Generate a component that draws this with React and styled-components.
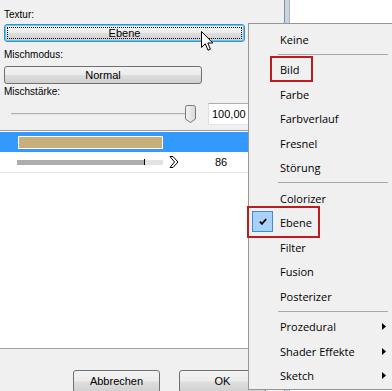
import React from 'react'
import styled, { createGlobalStyle, css } from 'styled-components'

const GlobalStyle = createGlobalStyle`
  html, body {
    margin: 0;
    padding: 0;
    background: #f0f0f0;
  }
  #root {
    width: 392px;
    height: 391px;
  }
`

const Window = styled.div`
  position: relative;
  width: 392px;
  height: 391px;
  overflow: hidden;
  display: flex;
  background: #f0f0f0;
  font-family: "Liberation Sans", Arial, sans-serif;
  color: #000;
`

const LeftPane = styled.div`
  width: 248px;
  height: 391px;
  flex: none;
  display: flex;
  flex-direction: column;
`

const Form = styled.div`
  padding: 9px 0 0 4px;
  display: flex;
  flex-direction: column;
  align-items: flex-start;
`

const Label = styled.div`
  font-size: 10px;
  line-height: 12px;
  margin-top: ${p => p.$gap || 0}px;
`

const buttonFace = css`
  box-sizing: border-box;
  border: 1px solid #707070;
  border-radius: 3px;
  background: linear-gradient(#f3f3f3 0%, #ececec 48%, #dedede 52%, #d0d0d0 100%);
  font-size: 11px;
  text-align: center;
`

const PushButton = styled.div`
  ${buttonFace}
  position: relative;
  width: ${p => p.$w}px;
  height: 18px;
  line-height: 16px;
  margin-top: ${p => p.$gap || 0}px;
  ${p => p.$focused && css`
    border-color: #3c8fcf;
    box-shadow: inset 0 0 0 1px #5ccaf4;
    &::after {
      content: '';
      position: absolute;
      inset: 2px;
      border: 1px dotted #000;
    }
  `}
`

const SliderRow = styled.div`
  display: flex;
  align-items: center;
  height: 22px;
  width: 244px;
  margin-top: 5px;
`

const Slider = styled.div`
  position: relative;
  width: 204px;
  height: 22px;
  flex: none;
  display: flex;
  align-items: center;
`

const Track = styled.div`
  margin: 0 0 1px 7px;
  width: 180px;
  height: 1px;
  background: #b2b2b2;
  border-bottom: 1px solid #e4e4e4;
`

const Thumb = styled.svg`
  position: absolute;
  top: 2px;
`

const NumberBox = styled.div`
  box-sizing: border-box;
  width: 60px;
  height: 22px;
  flex: none;
  border: 1px solid #abadb3;
  border-left-color: #dbdfe6;
  border-bottom-color: #e3e9ef;
  background: #fff;
  font-size: 11px;
  line-height: 20px;
  padding-left: 3px;
`

const List = styled.div`
  flex: 1;
  margin-top: 5px;
  border-top: 1px solid #a0a0a0;
  padding-top: 1px;
  background: #fff;
`

const Row = styled.div`
  display: flex;
  align-items: center;
  height: 20px;
  ${p => p.$selected && css`
    background: #3399ff;
  `}
  ${p => p.$ruled && css`
    border-bottom: 1px solid #e6e6e6;
  `}
`

const Swatch = styled.div`
  box-sizing: border-box;
  margin-left: 18px;
  width: 145px;
  height: 13px;
  border: 1px solid #fff;
  background: #c8ae7b;
`

const Progress = styled.div`
  position: relative;
  margin-left: 17px;
  width: 146px;
  height: 5px;
  background: #e3e3e3;
`

const ProgressFill = styled.div`
  height: 100%;
  background: #adadad;
`

const ProgressTick = styled.div`
  position: absolute;
  top: -1px;
  width: 1px;
  height: 6px;
  background: #000;
`

const Chevron = styled.svg`
  margin-left: 6px;
  flex: none;
`

const Count = styled.span`
  margin-left: 36px;
  font-size: 11px;
`

const Footer = styled.div`
  box-sizing: border-box;
  height: 43px;
  flex: none;
  border-top: 1px solid #a0a0a0;
  padding: 21px 0 0 73px;
  display: flex;
  gap: 19px;
`

const DialogButton = styled.div`
  ${buttonFace}
  flex: none;
  width: 87px;
  height: 23px;
  line-height: 21px;
`

const RightPane = styled.div`
  flex: 1;
  display: flex;
  padding-left: 36px;
`

const ScrollStrip = styled.div`
  width: 4px;
  flex: none;
  border-left: 1px solid #8c8c8c;
  border-right: 1px solid #a9b6c6;
  background: #c7d4e4;
`

const WhiteArea = styled.div`
  flex: 1;
  background: #fff;
`

const Menu = styled.div`
  position: absolute;
  left: 248px;
  top: 23px;
  width: 150px;
  border: 1px solid #979797;
  background: #f0f0f0;
  padding: 3px 0 1px 0;
  font-family: "Open Sans", "Noto Sans", sans-serif;
`

const MenuItem = styled.div`
  position: relative;
  display: flex;
  align-items: center;
  height: 24.5px;
  padding: 0 13px 0 31px;
  font-size: 11px;
  color: #000;
`

const Separator = styled.div`
  box-sizing: border-box;
  height: 6px;
  padding-top: 2px;
  &::before {
    content: '';
    display: block;
    margin-left: 29px;
    width: 110px;
    height: 1px;
    background: #a8a8a8;
  }
`

const SubArrow = styled.svg`
  margin-left: auto;
`

const CheckBox = styled.div`
  position: absolute;
  left: 3px;
  top: 0;
  box-sizing: border-box;
  width: 21px;
  height: 21px;
  border: 1px solid #3d8ddb;
  background: #a9d2f8;
  display: flex;
  align-items: center;
  justify-content: center;
`

const Callout = styled.div`
  position: absolute;
  box-sizing: border-box;
  border: 2px solid #bc1b22;
  left: ${p => p.$left}px;
  top: ${p => p.$top}px;
  width: ${p => p.$w}px;
  height: ${p => p.$h}px;
`

const Cursor = styled.svg`
  position: absolute;
  left: 201px;
  top: 31px;
`

const menuGroups = [
  ['Keine'],
  ['Bild', 'Farbe', 'Farbverlauf', 'Fresnel', 'Störung'],
  ['Colorizer', 'Ebene', 'Filter', 'Fusion', 'Posterizer'],
  ['Prozedural', 'Shader Effekte', 'Sketch'],
]

const submenus = ['Prozedural', 'Shader Effekte', 'Sketch']

const renderItem = name => (
  <MenuItem key={name}>
    {name === 'Ebene' && (
      <CheckBox>
        <svg width="8" height="7" viewBox="0 0 8 7">
          <path d="M0.8 3.6 L3 5.8 L7.2 1" fill="none" stroke="#000" strokeWidth="1.8" />
        </svg>
      </CheckBox>
    )}
    {name}
    {submenus.includes(name) && (
      <SubArrow width="4" height="7" viewBox="0 0 4 7">
        <path d="M0 0 L4 3.5 L0 7 Z" fill="#000" />
      </SubArrow>
    )}
    {name === 'Bild' && <Callout $left={21} $top={-1.5} $w={43} $h={26} />}
    {name === 'Ebene' && <Callout $left={-2} $top={-4.5} $w={73} $h={32} />}
  </MenuItem>
)

export default function App() {
  const level = 0.87
  return (
    <>
      <GlobalStyle />
      <Window>
        <LeftPane>
          <Form>
            <Label>Textur:</Label>
            <PushButton $w={241} $gap={3} $focused>Ebene</PushButton>
            <Label $gap={7}>Mischmodus:</Label>
            <PushButton $w={198} $gap={5}>Normal</PushButton>
            <Label $gap={2}>Mischstärke:</Label>
            <SliderRow>
              <Slider>
                <Track />
                <Thumb width="11" height="18" viewBox="0 0 11 18" style={{ left: 181 }}>
                  <defs>
                    <linearGradient id="thumbFace" x1="0" y1="0" x2="1" y2="0">
                      <stop offset="0" stopColor="#f4f4f4" />
                      <stop offset="1" stopColor="#d8d8d8" />
                    </linearGradient>
                  </defs>
                  <path
                    d="M0.5 2.5 Q0.5 0.5 2.5 0.5 L8.5 0.5 Q10.5 0.5 10.5 2.5 L10.5 14 L5.5 17.5 L0.5 14 Z"
                    fill="url(#thumbFace)"
                    stroke="#777"
                  />
                </Thumb>
              </Slider>
              <NumberBox>100,00</NumberBox>
            </SliderRow>
          </Form>
          <List>
            <Row $selected>
              <Swatch />
            </Row>
            <Row $ruled>
              <Progress>
                <ProgressFill style={{ width: `${level * 100}%` }} />
                <ProgressTick style={{ left: `${level * 100}%` }} />
              </Progress>
              <Chevron width="10" height="12" viewBox="0 0 10 12">
                <path d="M1 0.5 L4 0.5 L9 6 L4 11.5 L1 11.5 L5.5 6 Z" fill="#fff" stroke="#000" strokeWidth="1" />
              </Chevron>
              <Count>86</Count>
            </Row>
          </List>
          <Footer>
            <DialogButton>Abbrechen</DialogButton>
            <DialogButton>OK</DialogButton>
          </Footer>
        </LeftPane>
        <RightPane>
          <ScrollStrip />
          <WhiteArea />
        </RightPane>

        <Cursor width="13" height="21" viewBox="0 0 13 21">
          <path
            d="M0.5 0.5 L0.5 16.5 L4.3 12.8 L7 19.2 L9.4 18.2 L6.8 12 L11.8 12 Z"
            fill="#fff"
            stroke="#000"
            strokeWidth="1"
            strokeLinejoin="miter"
          />
        </Cursor>

        <Menu>
          {menuGroups.map((group, i) => (
            <React.Fragment key={i}>
              {i > 0 && <Separator />}
              {group.map(renderItem)}
            </React.Fragment>
          ))}
        </Menu>
      </Window>
    </>
  )
}
